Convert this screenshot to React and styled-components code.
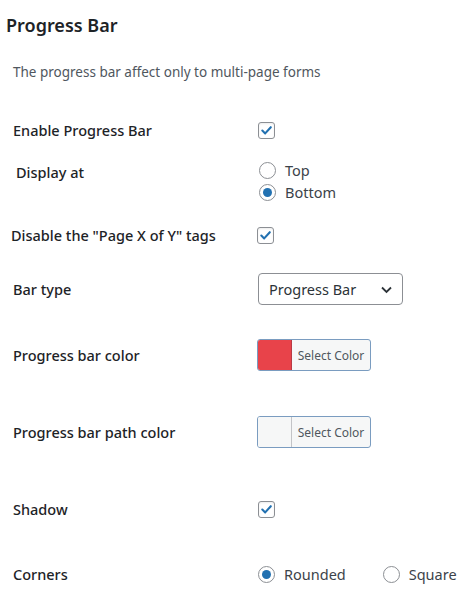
import React, { useState } from "react";
import styled, { createGlobalStyle } from "styled-components";

const GlobalStyle = createGlobalStyle`
  body {
    margin: 0;
    background: #fff;
    font-family: "Noto Sans", "Open Sans", "Liberation Sans", sans-serif;
    color: #1d2327;
  }
`;

const Page = styled.div`
  width: 474px;
  height: 606px;
  overflow: hidden;
`;

const Title = styled.h2`
  margin: 0;
  padding: 12px 0 12px 6px;
  font-size: 18px;
  line-height: 26px;
  font-weight: 600;
  color: #1d2327;
`;

const Description = styled.p`
  margin: 12px 0 0 13px;
  font-size: 13.5px;
  line-height: 20px;
  color: #50575e;
`;

const Rows = styled.div`
  margin-top: 28px;
  display: flex;
  flex-direction: column;
`;

const Row = styled.div`
  display: flex;
  align-items: ${(p) => (p.$top ? "flex-start" : "center")};
  height: ${(p) => p.$h}px;
  padding-top: ${(p) => p.$pt || 0}px;
  box-sizing: border-box;
`;

const Label = styled.div`
  width: ${(p) => 258 - (p.$x || 13)}px;
  padding-left: ${(p) => p.$x || 13}px;
  margin-top: ${(p) => p.$mt || 0}px;
  flex-shrink: 0;
  font-size: 14.5px;
  line-height: 22px;
  font-weight: 550;
  color: #1d2327;
`;

const Control = styled.div`
  display: flex;
  flex-direction: ${(p) => (p.$column ? "column" : "row")};
  align-items: ${(p) => (p.$column ? "flex-start" : "center")};
  margin-left: ${(p) => p.$dx || 0}px;
`;

const CheckBox = styled.span`
  width: 17px;
  height: 17px;
  box-sizing: border-box;
  border: 1px solid #8c8f94;
  border-radius: 3px;
  display: flex;
  align-items: center;
  justify-content: center;
  background: #fff;
  box-shadow: inset 0 1px 2px rgba(0, 0, 0, 0.08);
`;

const RadioItem = styled.label`
  display: flex;
  align-items: center;
  height: 22px;
  margin-right: ${(p) => p.$gap || 0}px;
  font-size: 14.5px;
  color: #3c434a;
  cursor: pointer;
`;

const RadioCircle = styled.span`
  width: 17px;
  height: 17px;
  box-sizing: border-box;
  border: 1px solid #8c8f94;
  border-radius: 50%;
  margin-right: 9px;
  display: flex;
  align-items: center;
  justify-content: center;
  background: #fff;
  &::after {
    content: "";
    display: ${(p) => (p.$on ? "block" : "none")};
    width: 9px;
    height: 9px;
    border-radius: 50%;
    background: #2271b1;
  }
`;

const Select = styled.div`
  width: 145px;
  height: 32px;
  box-sizing: border-box;
  border: 1px solid #8c8f94;
  border-radius: 4px;
  display: flex;
  align-items: center;
  justify-content: space-between;
  padding: 0 9px 0 10px;
  font-size: 14.5px;
  color: #2c3338;
  background: #fff;
`;

const ColorButton = styled.div`
  width: 114px;
  height: 32px;
  box-sizing: border-box;
  border: 1px solid #7a9cc0;
  border-radius: 3px;
  display: flex;
  overflow: hidden;
  background: #f6f7f7;
`;

const Swatch = styled.span`
  width: 33px;
  background: ${(p) => p.$color};
  border-right: 1px solid ${(p) => (p.$color === "#f6f7f7" ? "#c3c4c7" : "#b93a44")};
`;

const SwatchText = styled.span`
  flex: 1;
  display: flex;
  align-items: center;
  justify-content: center;
  font-size: 12px;
  color: #50575e;
`;

const Check = () => (
  <CheckBox>
    <svg width="13" height="13" viewBox="0 0 13 13">
      <path d="M2.3 6.6 L5.2 9.4 L10.8 3.2" fill="none" stroke="#2271b1" strokeWidth="2.1" strokeLinecap="round" strokeLinejoin="round" />
    </svg>
  </CheckBox>
);

const Radio = ({ on, label, gap, onClick }) => (
  <RadioItem $gap={gap} onClick={onClick}>
    <RadioCircle $on={on} />
    {label}
  </RadioItem>
);

export default function App() {
  const [pos, setPos] = useState("bottom");
  const [corner, setCorner] = useState("rounded");
  return (
    <Page>
      <GlobalStyle />
      <Title>Progress Bar</Title>
      <Description>The progress bar affect only to multi-page forms</Description>
      <Rows>
        <Row $h={40}>
          <Label>Enable Progress Bar</Label>
          <Control><Check /></Control>
        </Row>
        <Row $h={62} $top $pt={9}>
          <Label $x={16} $mt={2}>Display at</Label>
          <Control $column $dx={1}>
            <Radio label="Top" on={pos === "top"} onClick={() => setPos("top")} />
            <Radio label="Bottom" on={pos === "bottom"} onClick={() => setPos("bottom")} />
          </Control>
        </Row>
        <Row $h={46}>
          <Label $x={11}>Disable the "Page X of Y" tags</Label>
          <Control $dx={-1}><Check /></Control>
        </Row>
        <Row $h={62}>
          <Label>Bar type</Label>
          <Control>
            <Select>
              Progress Bar
              <svg width="13" height="13" viewBox="0 0 13 13">
                <path d="M2 4.5 L6.5 9 L11 4.5" fill="none" stroke="#2c3338" strokeWidth="1.8" />
              </svg>
            </Select>
          </Control>
        </Row>
        <Row $h={70}>
          <Label>Progress bar color</Label>
          <Control $dx={-1}>
            <ColorButton>
              <Swatch $color="#e8434a" />
              <SwatchText>Select Color</SwatchText>
            </ColorButton>
          </Control>
        </Row>
        <Row $h={84}>
          <Label>Progress bar path color</Label>
          <Control $dx={-1}>
            <ColorButton>
              <Swatch $color="#f6f7f7" />
              <SwatchText>Select Color</SwatchText>
            </ColorButton>
          </Control>
        </Row>
        <Row $h={70}>
          <Label>Shadow</Label>
          <Control><Check /></Control>
        </Row>
        <Row $h={60}>
          <Label>Corners</Label>
          <Control>
            <Radio label="Rounded" gap={37} on={corner === "rounded"} onClick={() => setCorner("rounded")} />
            <Radio label="Square" on={corner === "square"} onClick={() => setCorner("square")} />
          </Control>
        </Row>
      </Rows>
    </Page>
  );
}
